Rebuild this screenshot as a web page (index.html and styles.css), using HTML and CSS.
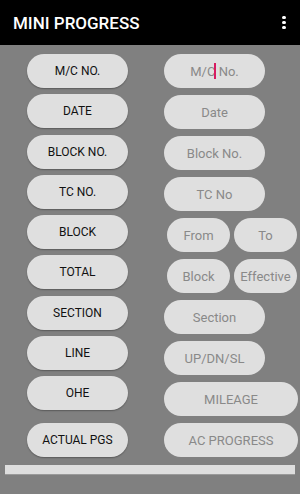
FILE: index.html
```html
<!DOCTYPE html>
<html lang="en">
<head>
    <meta charset="UTF-8">
    <meta name="viewport" content="width=device-width, initial-scale=1.0">
    <title>Mini Progress</title>
    <link rel="stylesheet" href="styles.css">
</head>
<body>
    <div class="toolbar">
        <h1>MINI PROGRESS</h1>
        <div class="menu-dots">
            <span></span><span></span><span></span>
        </div>
    </div>

    <div class="content">
        <div class="col-left">
            <button class="btn">M/C NO.</button>
            <button class="btn">DATE</button>
            <button class="btn">BLOCK NO.</button>
            <button class="btn">TC NO.</button>
            <button class="btn">BLOCK</button>
            <button class="btn">TOTAL</button>
            <button class="btn">SECTION</button>
            <button class="btn">LINE</button>
            <button class="btn">OHE</button>
            <button class="btn btn-last">ACTUAL PGS</button>
        </div>

        <div class="col-right">
            <div class="field focused">M/C No.<span class="cursor"></span></div>
            <div class="field">Date</div>
            <div class="field">Block No.</div>
            <div class="field">TC No</div>
            <div class="pair">
                <div class="field small">From</div>
                <div class="field small">To</div>
            </div>
            <div class="pair">
                <div class="field small">Block</div>
                <div class="field small">Effective</div>
            </div>
            <div class="field">Section</div>
            <div class="field">UP/DN/SL</div>
            <div class="field wide">MILEAGE</div>
            <div class="field wide">AC PROGRESS</div>
        </div>
    </div>

    <div class="bottom-bar"></div>
</body>
</html>
```

FILE: styles.css
```css
body {
    margin: 0;
    background-color: #808080;
    font-family: Roboto, "Noto Sans", sans-serif;
    width: 300px;
    height: 494px;
    overflow: hidden;
}
.toolbar {
    height: 45px;
    background: #000;
    display: flex;
    align-items: center;
    justify-content: space-between;
    padding: 0 14px 0 13px;
}
.toolbar h1 {
    margin: 0;
    color: #fff;
    font-size: 17px;
    font-weight: 500;
}
.menu-dots {
    display: flex;
    flex-direction: column;
    gap: 1.6px;
}
.menu-dots span {
    width: 3.6px;
    height: 3.6px;
    background: #fff;
    border-radius: 50%;
}
.content {
    display: flex;
    padding: 9px 0 0 27px;
    gap: 36px;
}
.col-left {
    width: 101px;
    display: flex;
    flex-direction: column;
    gap: 6.3px;
}
.btn {
    height: 34px;
    width: 101px;
    border: none;
    border-radius: 17px;
    background: #dfdfdf;
    box-shadow: 0 1px 1.5px rgba(0, 0, 0, 0.3);
    color: #111;
    font-family: Roboto, sans-serif;
    font-size: 12px;
    font-weight: 400;
    padding: 0;
}
.btn-last {
    margin-top: 6.6px;
}
.col-right {
    width: 134px;
    display: flex;
    flex-direction: column;
    gap: 7px;
}
.field {
    position: relative;
    height: 34px;
    width: 101px;
    box-sizing: border-box;
    border-radius: 17px;
    background: #dfdfdf;
    color: #898989;
    font-size: 13px;
    display: flex;
    align-items: center;
    justify-content: center;
}
.field.small {
    width: 63px;
}
.field.wide {
    width: 134px;
}
.pair {
    display: flex;
    gap: 4px;
    padding-left: 3px;
}
.cursor {
    position: absolute;
    left: 50px;
    top: 9px;
    width: 1.5px;
    height: 16px;
    background: #d81b60;
}
.bottom-bar {
    margin: 8px 0 0 5px;
    width: 290px;
    height: 9px;
    background: #dedede;
    border-bottom: 1px solid #9a9a9a;
}
```
